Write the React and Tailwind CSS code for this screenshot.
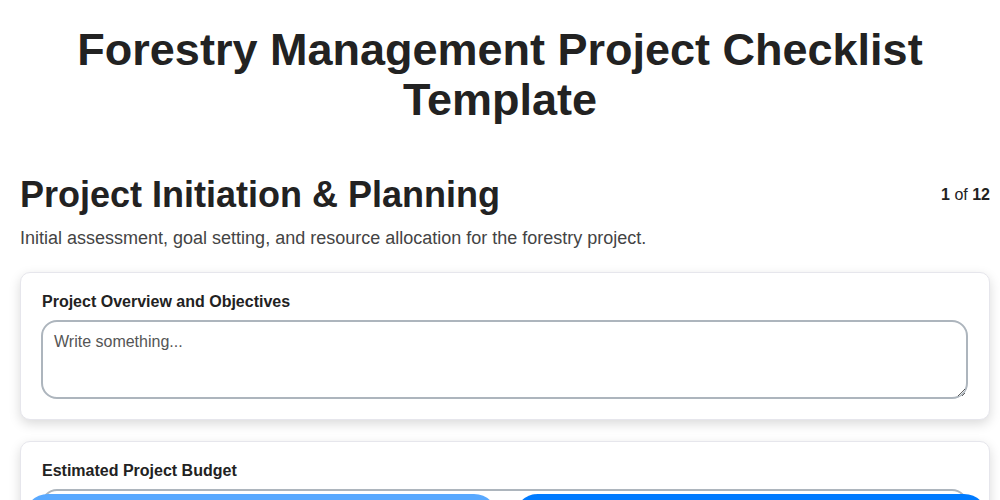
import React from "react";

export default function App() {
  return (
    <div className="h-screen overflow-hidden bg-white text-[#212529]" style={{ fontFamily: '"Liberation Sans", Arial, sans-serif' }}>
      <div className="px-5 pt-[25px]">
        <h1 className="text-center text-[45px] leading-[50px] font-bold text-[#222]">
          Forestry Management Project Checklist
          <br />
          Template
        </h1>
      </div>

      <div className="pl-5 pr-[10px]">
        <div className="mt-[48px] flex items-center justify-between">
          <h2 className="text-[36px] leading-[43px] font-bold text-[#222]">Project Initiation &amp; Planning</h2>
          <div className="text-[16px] leading-6 text-[#222]">
            <span className="font-bold">1</span> of <span className="font-bold">12</span>
          </div>
        </div>
        <p className="mt-[10px] text-[18px] leading-6 text-[#444]">
          Initial assessment, goal setting, and resource allocation for the forestry project.
        </p>

        <div className="mt-[22px] flex flex-col gap-[21px]">
          <div className="rounded-[10px] border border-[#e6e6ec] bg-white px-5 pt-[19px] pb-5 shadow-[0_4px_12px_rgba(0,0,0,0.15)]">
            <label className="block text-[16px] leading-5 font-bold text-[#222] pl-[1px]">Project Overview and Objectives</label>
            <textarea
              className="mt-[8px] block h-[79px] w-[calc(100%-1px)] resize-y rounded-[16px] border-2 border-[#adb5bd] px-[11px] py-[8px] text-[16px] leading-6 text-[#222] placeholder:text-[#555] outline-none"
              placeholder="Write something..."
            />
          </div>

          <div className="rounded-[10px] border border-[#e6e6ec] bg-white px-5 pt-[19px] pb-5 shadow-[0_4px_12px_rgba(0,0,0,0.15)]">
            <label className="block text-[16px] leading-5 font-bold text-[#222] pl-[1px]">Estimated Project Budget</label>
            <input
              className="mt-[8px] block h-[44px] w-[calc(100%-1px)] rounded-[16px] border-2 border-[#adb5bd] px-[11px] text-[16px] text-[#222] outline-none"
              placeholder=""
            />
          </div>
        </div>
      </div>

      <div className="fixed left-[24px] right-[12px] top-[494px] flex gap-4">
        <button aria-label="Previous" className="h-12 flex-1 rounded-full bg-[#59a9ff]"></button>
        <button aria-label="Next" className="h-12 flex-1 rounded-full bg-[#007bff]"></button>
      </div>
    </div>
  );
}
